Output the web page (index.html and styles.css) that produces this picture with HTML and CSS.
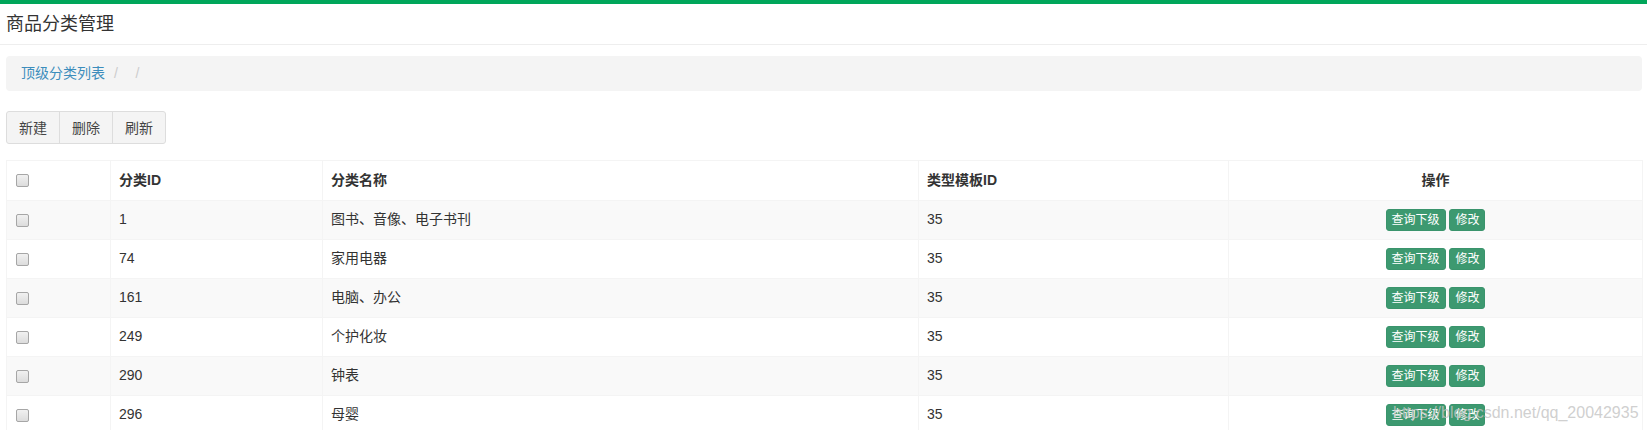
FILE: index.html
```html
<!DOCTYPE html>
<html lang="zh-CN">
<head>
<meta charset="utf-8">
<title>商品分类管理</title>
<link rel="stylesheet" href="styles.css">
</head>
<body>
<div class="page">
  <header class="page-header">
    <h1 class="page-title">商品分类管理</h1>
  </header>
  <section class="content">
    <ol class="breadcrumb">
      <li><a href="#">顶级分类列表</a></li>
      <li></li>
      <li></li>
    </ol>
    <div class="toolbar">
      <div class="btn-group">
        <button class="btn">新建</button><button class="btn">删除</button><button class="btn">刷新</button>
      </div>
    </div>
    <table class="data-table">
      <colgroup>
        <col class="c-check"><col class="c-id"><col class="c-name"><col class="c-type"><col class="c-op">
      </colgroup>
      <thead>
        <tr>
          <th><input type="checkbox" class="cb"></th>
          <th>分类ID</th>
          <th>分类名称</th>
          <th>类型模板ID</th>
          <th class="center">操作</th>
        </tr>
      </thead>
      <tbody>
        <tr>
          <td><input type="checkbox" class="cb"></td><td>1</td><td>图书、音像、电子书刊</td><td>35</td>
          <td class="center"><button class="btn-xs">查询下级</button> <button class="btn-xs">修改</button></td>
        </tr>
        <tr>
          <td><input type="checkbox" class="cb"></td><td>74</td><td>家用电器</td><td>35</td>
          <td class="center"><button class="btn-xs">查询下级</button> <button class="btn-xs">修改</button></td>
        </tr>
        <tr>
          <td><input type="checkbox" class="cb"></td><td>161</td><td>电脑、办公</td><td>35</td>
          <td class="center"><button class="btn-xs">查询下级</button> <button class="btn-xs">修改</button></td>
        </tr>
        <tr>
          <td><input type="checkbox" class="cb"></td><td>249</td><td>个护化妆</td><td>35</td>
          <td class="center"><button class="btn-xs">查询下级</button> <button class="btn-xs">修改</button></td>
        </tr>
        <tr>
          <td><input type="checkbox" class="cb"></td><td>290</td><td>钟表</td><td>35</td>
          <td class="center"><button class="btn-xs">查询下级</button> <button class="btn-xs">修改</button></td>
        </tr>
        <tr>
          <td><input type="checkbox" class="cb"></td><td>296</td><td>母婴</td><td>35</td>
          <td class="center"><button class="btn-xs">查询下级</button> <button class="btn-xs">修改</button></td>
        </tr>
      </tbody>
    </table>
  </section>
  <div class="watermark">https://blog.csdn.net/qq_20042935</div>
</div>
</body>
</html>
```

FILE: styles.css
```css
* { box-sizing: border-box; }
html, body {
  margin: 0;
  padding: 0;
  background: #fff;
  overflow: hidden;
}
body {
  font-family: "Liberation Sans", "Noto Sans CJK SC", sans-serif;
  font-size: 14px;
  line-height: 1.42857;
  color: #333;
}
.page {
  position: relative;
  height: 430px;
  border-top: 4px solid #00a65a;
}
.page-header {
  height: 41px;
  border-bottom: 1px solid #eeeeee;
  padding: 0 6px;
  display: flex;
  align-items: center;
}
.page-title {
  margin: 0;
  font-size: 18px;
  font-weight: normal;
  color: #333;
  line-height: 40px;
}
.content {
  padding: 11px 5px 0 6px;
}
.breadcrumb {
  list-style: none;
  margin: 0 0 20px 0;
  padding: 8px 15px;
  background: #f4f4f4;
  border-radius: 4px;
  height: 35px;
}
.breadcrumb li {
  display: inline-block;
  color: #777;
}
.breadcrumb li + li::before {
  content: "/\00a0";
  padding: 0 5px;
  color: #ccc;
}
.breadcrumb a {
  color: #3c8dbc;
  text-decoration: none;
}
.toolbar {
  margin-bottom: 16px;
}
.btn-group {
  display: inline-flex;
}
.btn {
  font-family: inherit;
  font-size: 14px;
  line-height: 20px;
  padding: 6px 12px;
  height: 33px;
  background: #f4f4f4;
  color: #444;
  border: 1px solid #ddd;
  margin: 0;
  margin-left: -1px;
  border-radius: 0;
}
.btn:first-child {
  margin-left: 0;
  border-radius: 3px 0 0 3px;
}
.btn:last-child {
  border-radius: 0 3px 3px 0;
}
.data-table {
  width: 1636px;
  border-collapse: collapse;
  table-layout: fixed;
  border: 1px solid #f4f4f4;
}
.c-check { width: 104px; }
.c-id { width: 212px; }
.c-name { width: 596px; }
.c-type { width: 310px; }
.c-op { width: 414px; }
.data-table th,
.data-table td {
  border: 1px solid #f4f4f4;
  padding: 8px;
  text-align: left;
  vertical-align: middle;
}
.data-table th {
  font-weight: bold;
  color: #333;
  height: 40px;
}
.data-table td {
  height: 39px;
}
.data-table tbody tr:nth-child(odd) {
  background: #f9f9f9;
}
.data-table .center {
  text-align: center;
}
.cb {
  -webkit-appearance: none;
  appearance: none;
  width: 13px;
  height: 13px;
  margin: 0 0 0 1px;
  border: 1px solid #a6a6a6;
  border-radius: 2px;
  background: linear-gradient(#f1f1f1, #dcdcdc);
  vertical-align: middle;
  display: inline-block;
}
.btn-xs {
  font-family: inherit;
  font-size: 12px;
  line-height: 18px;
  padding: 1px 5px;
  height: 22px;
  background: #3d9970;
  color: #fff;
  border: 1px solid #3a946c;
  border-radius: 3px;
  vertical-align: middle;
  margin: 0;
}
.watermark {
  position: absolute;
  z-index: 2;
  left: 1393px;
  top: 398px;
  font-family: "Liberation Sans", sans-serif;
  font-size: 16px;
  color: rgba(195, 195, 195, 0.8);
  white-space: nowrap;
  pointer-events: none;
}
```
